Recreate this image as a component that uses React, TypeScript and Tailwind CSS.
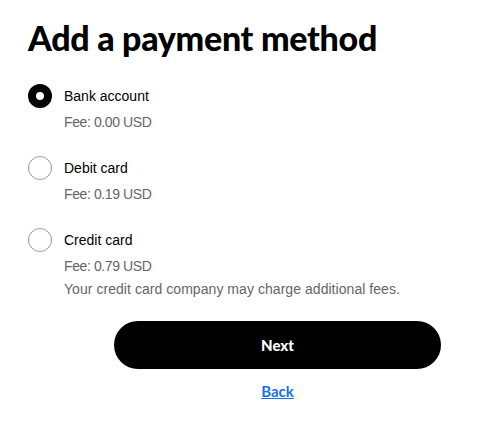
import React, { useState } from "react";

const options = [
  { id: "bank", label: "Bank account", fee: "Fee: 0.00 USD" },
  { id: "debit", label: "Debit card", fee: "Fee: 0.19 USD" },
  {
    id: "credit",
    label: "Credit card",
    fee: "Fee: 0.79 USD",
    note: "Your credit card company may charge additional fees.",
  },
];

export default function App() {
  const [selected, setSelected] = useState("bank");

  return (
    <div className="min-h-screen bg-white px-[28px] pt-[17px] font-['Liberation_Sans',Arial,sans-serif]">
      <h1 className="font-['Lato',sans-serif] text-[34px] font-black leading-[42px] tracking-[-0.3px] text-black">
        Add a payment method
      </h1>

      <div className="mt-[25px] flex flex-col gap-[24px]">
        {options.map((o) => {
          const active = selected === o.id;
          return (
            <label key={o.id} className="flex cursor-pointer flex-col" onClick={() => setSelected(o.id)}>
              <div className="flex items-center gap-3">
                {active ? (
                  <span className="h-6 w-6 rounded-full border-[8px] border-black bg-white" />
                ) : (
                  <span className="h-6 w-6 rounded-full border border-[#999] bg-white" />
                )}
                <span className="text-[14px] text-black">{o.label}</span>
              </div>
              <div className="mt-[4px] pl-9 text-[14px] leading-[20px] tracking-[-0.4px] text-[#666]">{o.fee}</div>
              {o.note && (
                <div className="mt-[3px] pl-9 text-[14px] leading-[20px] tracking-[0.05px] text-[#666]">{o.note}</div>
              )}
            </label>
          );
        })}
      </div>

      <div className="ml-[86px] mt-[22px] flex w-[327px] flex-col items-center">
        <button className="h-12 w-full rounded-full bg-black font-['Lato',sans-serif] text-[15px] font-black text-white">
          Next
        </button>
        <a href="#" className="mt-[11px] font-['Lato',sans-serif] text-[15px] font-bold text-[#1a6ff0] underline">
          Back
        </a>
      </div>
    </div>
  );
}
